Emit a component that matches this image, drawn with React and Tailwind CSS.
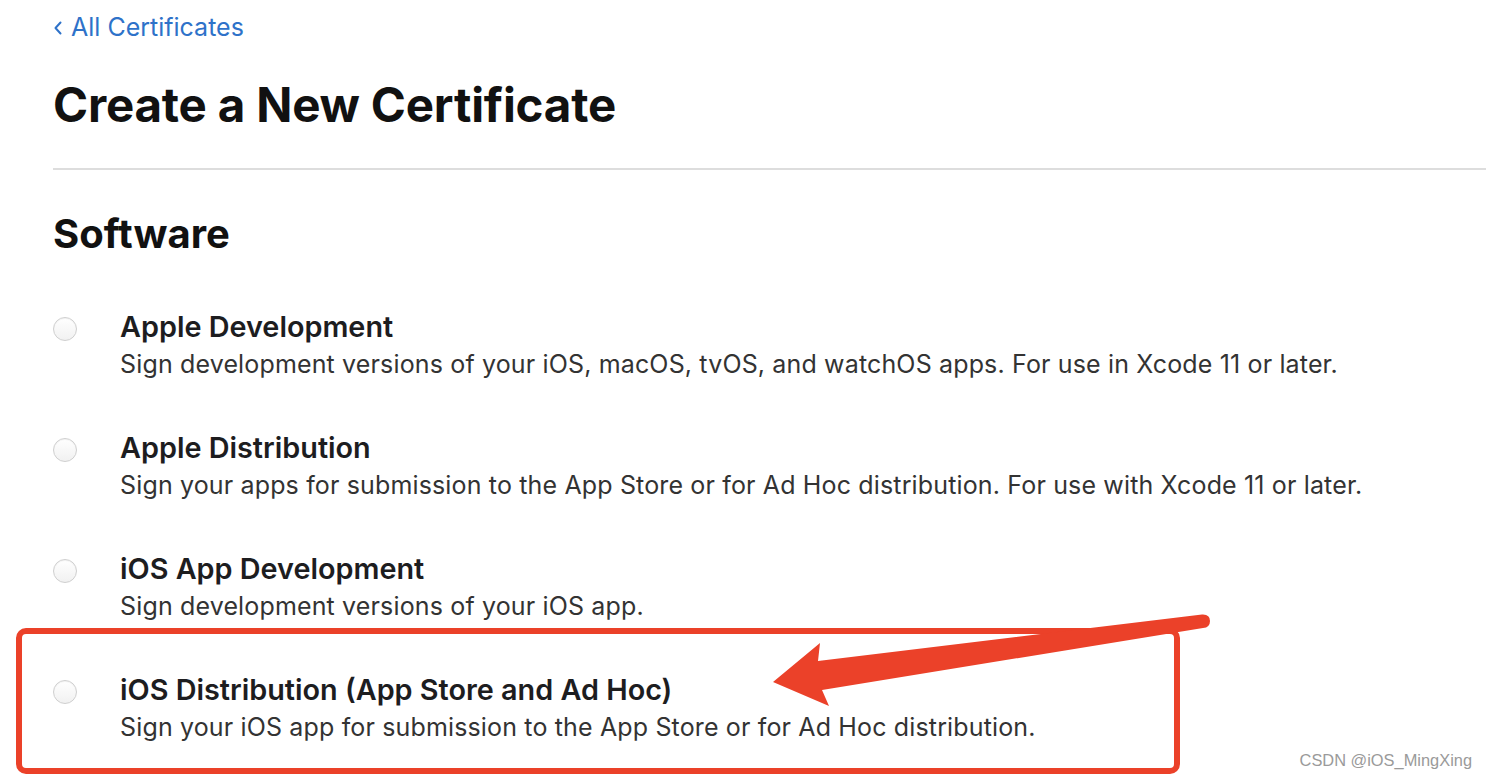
import React from "react";

const items = [
  {
    title: "Apple Development",
    desc: "Sign development versions of your iOS, macOS, tvOS, and watchOS apps. For use in Xcode 11 or later.",
  },
  {
    title: "Apple Distribution",
    desc: "Sign your apps for submission to the App Store or for Ad Hoc distribution. For use with Xcode 11 or later.",
  },
  {
    title: "iOS App Development",
    desc: "Sign development versions of your iOS app.",
  },
  {
    title: "iOS Distribution (App Store and Ad Hoc)",
    desc: "Sign your iOS app for submission to the App Store or for Ad Hoc distribution.",
  },
];

export default function App() {
  return (
    <div
      className="relative w-[1486px] h-[780px] overflow-hidden bg-white"
      style={{ fontFamily: "Inter, 'Noto Sans', sans-serif" }}
    >
      <div className="pl-[53px] pt-[11px]">
        <a className="flex items-center gap-[8px] text-[25px] leading-[32px] text-[#2e72c9]">
          <svg width="10" height="16" viewBox="0 0 10 16" className="mt-[2px]">
            <path d="M7.5 2.5 L2.5 8 L7.5 13.5" fill="none" stroke="#2e72c9" strokeWidth="2" strokeLinecap="round" strokeLinejoin="round" />
          </svg>
          <span>All Certificates</span>
        </a>
        <h1 className="mt-[34px] text-[47.5px] leading-[56px] font-bold text-[#111111] tracking-[-0.2px]">
          Create a New Certificate
        </h1>
        <div className="mt-[35px] h-[2px] bg-[#dddddd]" />
        <h2 className="mt-[40px] text-[40px] leading-[48px] font-bold text-[#111111]">Software</h2>
        <div className="mt-[51px] flex flex-col gap-[48px]">
          {items.map((it) => (
            <div key={it.title} className="flex items-start">
              <div className="mt-[8px] w-[24px] h-[24px] rounded-full border border-[#cfcfcf] bg-gradient-to-b from-[#ffffff] to-[#f1f1f1] shadow-[inset_0_1px_1px_rgba(0,0,0,0.05)] shrink-0" />
              <div className="ml-[43px]">
                <div className="text-[28.8px] leading-[36px] font-semibold text-[#1d1d1f]">{it.title}</div>
                <div className="mt-[1px] text-[25px] leading-[36px] tracking-[0.15px] text-[#333333]">{it.desc}</div>
              </div>
            </div>
          ))}
        </div>
      </div>

      <div className="absolute left-[16px] top-[628px] w-[1164px] h-[146px] rounded-[10px] border-[6px] border-[#eb4129]" />

      <svg className="absolute left-0 top-0" width="1486" height="780" viewBox="0 0 1486 780">
        <path
          d="M1202 614.5 Q1210 614 1210 621 Q1210 627.5 1203 628 L822 690 L829 706 L773 682 L820 643 L818 661 Z"
          fill="#eb4129"
        />
      </svg>

      <div
        className="absolute right-[14px] bottom-[7px] text-[16.4px] text-[#9a9a9a]"
        style={{ fontFamily: "'Liberation Sans', Arial, sans-serif" }}
      >
        CSDN @iOS_MingXing
      </div>
    </div>
  );
}
